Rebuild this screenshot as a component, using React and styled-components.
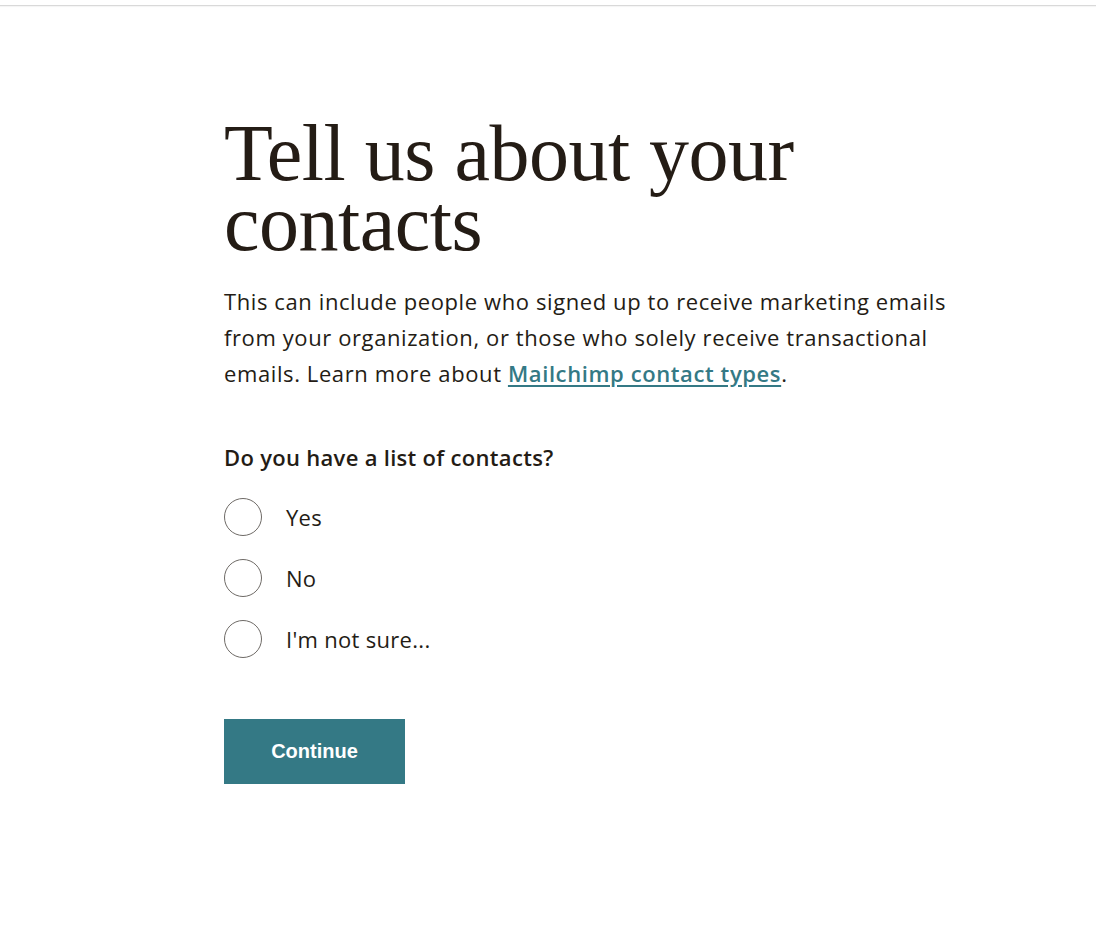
import React, { useState } from 'react';
import styled, { createGlobalStyle } from 'styled-components';

const GlobalStyle = createGlobalStyle`
  body {
    margin: 0;
    background: #fff;
    color: #241c15;
    font-family: "Open Sans", Roboto, "Liberation Sans", sans-serif;
  }
`;

const TopBar = styled.div`
  height: 5px;
  border-bottom: 1px solid #d9d9d9;
  box-shadow: 0 1px 1px rgba(0, 0, 0, 0.04);
`;

const Page = styled.main`
  padding: 112px 0 0 224px;
  width: 780px;
`;

const Heading = styled.h1`
  margin: 0;
  max-width: 610px;
  font-family: "Liberation Serif", serif;
  font-weight: 400;
  font-size: 80px;
  line-height: 70px;
  letter-spacing: -0.5px;
  color: #241c15;
`;

const Intro = styled.p`
  margin: 25px 0 0;
  max-width: 760px;
  font-size: 22px;
  line-height: 36px;
  letter-spacing: 0.6px;
  color: #241c15;
`;

const Link = styled.a`
  color: #347985;
  font-weight: 600;
  text-decoration: underline;
  text-underline-offset: 3px;
`;

const Fieldset = styled.fieldset`
  margin: 52px 0 0;
  padding: 0;
  border: 0;
`;

const Legend = styled.legend`
  padding: 0;
  font-size: 22px;
  font-weight: 600;
  line-height: 28px;
  letter-spacing: 0.3px;
  margin-bottom: 27px;
`;

const Options = styled.div`
  display: flex;
  flex-direction: column;
  gap: 23px;
`;

const Option = styled.label`
  display: flex;
  align-items: center;
  gap: 24px;
  font-size: 22px;
  letter-spacing: 0.3px;
  cursor: pointer;
`;

const Radio = styled.span`
  width: 36px;
  height: 36px;
  border: 1px solid #6e6a66;
  border-radius: 50%;
  box-sizing: content-box;
  display: flex;
  align-items: center;
  justify-content: center;
  &::after {
    content: '';
    width: 16px;
    height: 16px;
    border-radius: 50%;
    background: ${p => (p.$checked ? '#347985' : 'transparent')};
  }
`;

const HiddenInput = styled.input`
  position: absolute;
  opacity: 0;
  width: 0;
  height: 0;
`;

const Button = styled.button`
  margin-top: 61px;
  width: 181px;
  height: 65px;
  border: 0;
  background: #347985;
  color: #fff;
  font-family: "Liberation Sans", Arial, sans-serif;
  font-weight: 700;
  font-size: 20px;
  cursor: pointer;
`;

const choices = ['Yes', 'No', "I'm not sure..."];

const App = () => {
  const [value, setValue] = useState(null);
  return (
    <>
      <GlobalStyle />
      <TopBar />
      <Page>
        <Heading>Tell us about your contacts</Heading>
        <Intro>
          This can include people who signed up to receive marketing emails
          from your organization, or those who solely receive transactional
          emails. Learn more about <Link href="#">Mailchimp contact types</Link>.
        </Intro>
        <Fieldset>
          <Legend>Do you have a list of contacts?</Legend>
          <Options>
            {choices.map(c => (
              <Option key={c}>
                <HiddenInput
                  type="radio"
                  name="contacts"
                  checked={value === c}
                  onChange={() => setValue(c)}
                />
                <Radio $checked={value === c} />
                {c}
              </Option>
            ))}
          </Options>
        </Fieldset>
        <Button>Continue</Button>
      </Page>
    </>
  );
};

export default App;
